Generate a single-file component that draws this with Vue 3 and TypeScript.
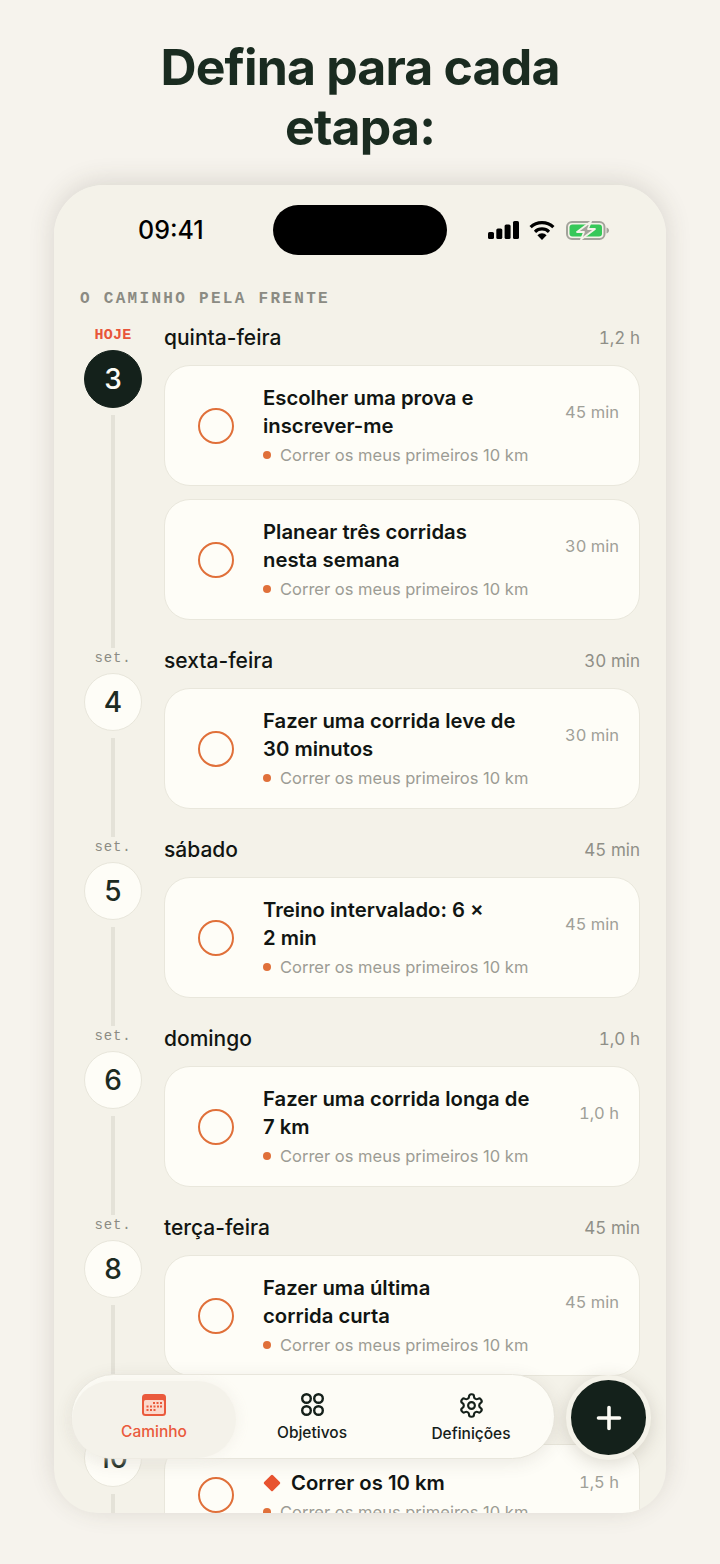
<script setup lang="ts">
interface Task { title: string; time: string; goalMark?: boolean }
interface Day { label: string; num: string; name: string; total: string; today?: boolean; tasks: Task[] }

const days: Day[] = [
  { label: 'HOJE', num: '3', name: 'quinta-feira', total: '1,2 h', today: true, tasks: [
    { title: 'Escolher uma prova e\ninscrever-me', time: '45 min' },
    { title: 'Planear três corridas\nnesta semana', time: '30 min' },
  ] },
  { label: 'set.', num: '4', name: 'sexta-feira', total: '30 min', tasks: [
    { title: 'Fazer uma corrida leve de\n30 minutos', time: '30 min' },
  ] },
  { label: 'set.', num: '5', name: 'sábado', total: '45 min', tasks: [
    { title: 'Treino intervalado: 6 ×\n2 min', time: '45 min' },
  ] },
  { label: 'set.', num: '6', name: 'domingo', total: '1,0 h', tasks: [
    { title: 'Fazer uma corrida longa de\n7 km', time: '1,0 h' },
  ] },
  { label: 'set.', num: '8', name: 'terça-feira', total: '45 min', tasks: [
    { title: 'Fazer uma última\ncorrida curta', time: '45 min' },
  ] },
  { label: 'set.', num: '10', name: 'quinta-feira', total: '1,5 h', tasks: [
    { title: 'Correr os 10 km', time: '1,5 h', goalMark: true },
  ] },
]
</script>

<template>
  <div class="page">
    <h1 class="headline">Defina para cada<br />etapa:</h1>
    <div class="phone">
      <div class="screen">
        <div class="status">
          <div class="clock">09:41</div>
          <div class="island"></div>
          <div class="indicators">
            <svg width="31" height="18" viewBox="0 0 31 18" fill="#000">
              <rect x="0" y="11" width="6" height="7" rx="1.6" />
              <rect x="8.3" y="7.5" width="6" height="10.5" rx="1.6" />
              <rect x="16.6" y="3.5" width="6" height="14.5" rx="1.6" />
              <rect x="25" y="0" width="6" height="18" rx="1.6" />
            </svg>
            <svg class="wifi" width="26" height="20" viewBox="0 0 26 20" fill="none" stroke="#000" stroke-width="3.2">
              <path d="M1.6 7.2a16.4 16.4 0 0 1 22.8 0" />
              <path d="M6 11.8a10 10 0 0 1 14 0" />
              <path d="M13 20l-4.6-4.7a6.4 6.4 0 0 1 9.2 0z" fill="#000" stroke="none" />
            </svg>
            <svg class="battery" width="43" height="19" viewBox="0 0 43 19" fill="none">
              <rect x="1" y="1" width="37.5" height="17" rx="5" stroke="#a3a39b" stroke-width="2" />
              <rect x="3.5" y="3.5" width="32.5" height="12" rx="3" fill="#37c859" />
              <path d="M40.5 6.5c1.6.5 2.5 1.6 2.5 3s-.9 2.5-2.5 3z" fill="#a3a39b" />
              <path d="M25 0.5 11 11h7L15 18.500 29 8h-7z" fill="#a3a39b" stroke="#f4f2e9" stroke-width="1.800" stroke-linejoin="round" />
            </svg>
          </div>
        </div>

        <div class="section-label">O CAMINHO PELA FRENTE</div>

        <div class="timeline">
          <section v-for="day in days" :key="day.num" class="day">
            <div class="rail">
              <div class="rail-label" :class="{ today: day.today }">{{ day.label }}</div>
              <div class="bubble" :class="{ current: day.today }">{{ day.num }}</div>
              <div class="rail-line"></div>
            </div>
            <div class="day-body">
              <div class="day-head">
                <span class="day-name">{{ day.name }}</span>
                <span class="day-total">{{ day.total }}</span>
              </div>
              <div class="task-list">
                <article v-for="task in day.tasks" :key="task.title" class="task" :class="{ milestone: task.goalMark }">
                  <div class="ring"></div>
                  <div class="task-text">
                    <div class="task-title">
                      <svg v-if="task.goalMark" class="diamond" width="18" height="18" viewBox="0 0 18 18">
                        <path d="M9 .8a1.4 1.4 0 0 1 1 .4l6.800 6.800a1.400 1.400 0 0 1 0 2L10 16.800a1.400 1.400 0 0 1-2 0L1.200 10a1.400 1.400 0 0 1 0-2L8 1.200a1.400 1.400 0 0 1 1-.4z" fill="#e8532f" />
                      </svg>
                      <span>{{ task.title }}</span>
                    </div>
                    <div class="task-goal"><i class="goal-dot"></i>Correr os meus primeiros 10 km</div>
                  </div>
                  <div class="task-time">{{ task.time }}</div>
                </article>
              </div>
            </div>
          </section>
        </div>
      </div>

      <nav class="tabbar">
        <div class="tab active">
          <svg width="24" height="22" viewBox="0 0 24 22">
            <rect x="0" y="0" width="24" height="22" rx="3.5" fill="#ea5a3c" />
            <rect x="2" y="6" width="20" height="14" rx="1.5" fill="#fbd9cd" />
            <g fill="#ea5a3c">
              <rect x="11" y="8" width="2" height="2" /><rect x="14.5" y="8" width="2" height="2" /><rect x="18" y="8" width="2" height="2" />
              <rect x="4.500" y="11.500" width="2" height="2" /><rect x="8" y="11.500" width="2" height="2" /><rect x="11.500" y="11.500" width="2" height="2" /><rect x="15" y="11.500" width="2" height="2" /><rect x="18" y="11.500" width="2" height="2" />
              <rect x="4.500" y="15" width="2" height="2" /><rect x="8" y="15" width="2" height="2" /><rect x="11.500" y="15" width="2" height="2" />
            </g>
          </svg>
          <span>Caminho</span>
        </div>
        <div class="tab goals">
          <svg width="23" height="23" viewBox="0 0 23 23" fill="none" stroke="#15201a" stroke-width="2.400">
            <circle cx="5.500" cy="5.500" r="4.300" /><circle cx="17.500" cy="5.500" r="4.300" />
            <circle cx="5.500" cy="17.500" r="4.300" /><circle cx="17.500" cy="17.500" r="4.300" />
          </svg>
          <span>Objetivos</span>
        </div>
        <div class="tab settings">
          <svg width="27" height="27" viewBox="0 0 24 24" fill="none" stroke="#15201a" stroke-width="1.900" stroke-linecap="round" stroke-linejoin="round">
            <path d="M12.220 2h-.44a2 2 0 0 0-2 2v.18a2 2 0 0 1-1 1.730l-.43.25a2 2 0 0 1-2 0l-.15-.08a2 2 0 0 0-2.730.73l-.22.38a2 2 0 0 0 .73 2.730l.15.1a2 2 0 0 1 1 1.720v.51a2 2 0 0 1-1 1.740l-.15.09a2 2 0 0 0-.73 2.730l.22.38a2 2 0 0 0 2.730.73l.15-.08a2 2 0 0 1 2 0l.43.25a2 2 0 0 1 1 1.730V20a2 2 0 0 0 2 2h.44a2 2 0 0 0 2-2v-.18a2 2 0 0 1 1-1.730l.43-.25a2 2 0 0 1 2 0l.15.08a2 2 0 0 0 2.730-.73l.22-.39a2 2 0 0 0-.73-2.730l-.15-.08a2 2 0 0 1-1-1.740v-.5a2 2 0 0 1 1-1.740l.15-.09a2 2 0 0 0 .73-2.730l-.22-.38a2 2 0 0 0-2.730-.73l-.15.08a2 2 0 0 1-2 0l-.43-.25a2 2 0 0 1-1-1.730V4a2 2 0 0 0-2-2z" />
            <circle cx="12" cy="12" r="3" />
          </svg>
          <span>Definições</span>
        </div>
      </nav>

      <button class="fab" type="button" aria-label="Adicionar">
        <svg width="26" height="26" viewBox="0 0 26 26" stroke="#fdfcf6" stroke-width="3.600" stroke-linecap="round">
          <path d="M13 2.500v21M2.500 13h21" />
        </svg>
      </button>
    </div>
  </div>
</template>

<style>
html, body { margin: 0; background: #f6f3ed; }
</style>

<style scoped>
.page {
  width: 720px;
  height: 1564px;
  overflow: hidden;
  background: #f6f3ed;
  font-family: Inter, "Liberation Sans", sans-serif;
  color: #111512;
}
.headline {
  margin: 0;
  padding-top: 37px;
  height: 185px;
  box-sizing: border-box;
  text-align: center;
  font-size: 50px;
  line-height: 60px;
  font-weight: 700;
  letter-spacing: -0.85px;
  color: #1a2b20;
}
.phone {
  position: relative;
  width: 612px;
  height: 1328px;
  margin-left: 54px;
  border-radius: 50px;
  box-shadow: 0 -3px 26px rgba(70, 60, 45, 0.16);
}
.screen {
  height: 100%;
  overflow: hidden;
  border-radius: 50px 50px 44px 44px;
  background: #f4f2e9;
  padding: 20px 26px 0 30px;
  box-sizing: border-box;
}
.status {
  display: grid;
  grid-template-columns: 1fr 174px 1fr;
  align-items: center;
  height: 50px;
  margin: 0 -26px 0 -30px;
}
.clock {
  padding-left: 84px;
  font-size: 25px;
  font-weight: 500;
  color: #000;
}
.island {
  height: 50px;
  border-radius: 25px;
  background: #000;
}
.indicators {
  display: flex;
  align-items: center;
  padding-left: 41px;
}
.wifi { margin-left: 10px; }
.battery { margin-left: 11px; }
.section-label {
  margin: 33px 0 17px -4px;
  height: 20px;
  font-family: "Liberation Mono", monospace;
  font-weight: 700;
  font-size: 16px;
  line-height: 22px;
  letter-spacing: 2.300px;
  color: #8b8b83;
  white-space: nowrap;
}
.day {
  display: flex;
  gap: 22px;
}
.rail {
  width: 58px;
  flex: none;
  display: flex;
  flex-direction: column;
  align-items: center;
}
.rail-label {
  height: 18px;
  line-height: 20px;
  margin-bottom: 7px;
  font-family: "Liberation Mono", monospace;
  font-size: 14px;
  letter-spacing: 0.8px;
  color: #8b8b83;
}
.rail-label.today {
  line-height: 21px;
  font-weight: 700;
  font-size: 15px;
  letter-spacing: 0.3px;
  color: #e8553a;
}
.bubble {
  width: 58px;
  height: 58px;
  flex: none;
  box-sizing: border-box;
  border-radius: 50%;
  display: flex;
  align-items: center;
  justify-content: center;
  font-size: 28px;
  font-weight: 550;
  color: #1c2b22;
  background: #fefdf7;
  border: 1.500px solid #e8e6db;
}
.bubble.current {
  background: #14211b;
  border-color: #14211b;
  color: #fdfcf6;
}
.rail-line {
  flex: 1;
  width: 4px;
  margin-top: 7px;
  background: #e4e2d8;
}
.day-body {
  flex: 1;
  min-width: 0;
  padding-bottom: 28px;
}
.day-head {
  display: flex;
  justify-content: space-between;
  align-items: center;
  height: 24px;
  margin-bottom: 16px;
}
.day-name {
  font-size: 21px;
  font-weight: 500;
  color: #111512;
}
.day-total {
  font-size: 17px;
  color: #8f8f87;
  font-variant-numeric: tabular-nums;
  padding-top: 1px;
}
.task-list {
  display: flex;
  flex-direction: column;
  gap: 13px;
}
.task {
  display: flex;
  align-items: center;
  height: 121px;
  box-sizing: border-box;
  padding: 0 20px 0 33px;
  background: #fefdf7;
  border: 1.500px solid #e9e7dc;
  border-radius: 26px;
}
.task.milestone { height: 102px; }
.ring {
  width: 36px;
  height: 36px;
  flex: none;
  box-sizing: border-box;
  border: 2.500px solid #e0703a;
  border-radius: 50%;
}
.task-text {
  flex: 1;
  min-width: 0;
  margin-left: 29px;
}
.task-title {
  display: flex;
  align-items: center;
  font-size: 20.300px;
  line-height: 28px;
  font-weight: 600;
  color: #111512;
  white-space: pre-line;
}
.milestone .task-title { margin-top: 3px; }
.diamond { margin-right: 10px; flex: none; }
.task-goal {
  display: flex;
  align-items: center;
  margin-top: 3px;
  height: 24px;
  font-size: 16.500px;
  color: #9c9c94;
  white-space: nowrap;
}
.goal-dot {
  width: 8px;
  height: 8px;
  border-radius: 50%;
  background: #e0703a;
  margin-right: 9px;
}
.task-time {
  flex: none;
  padding-bottom: 27px;
  font-size: 16.500px;
  color: #a0a098;
  font-variant-numeric: tabular-nums;
}
.tabbar {
  position: absolute;
  left: 17px;
  bottom: 54px;
  width: 484px;
  height: 85px;
  box-sizing: border-box;
  display: grid;
  grid-template-columns: 164px 152px 1fr;
  background: #fdfcf6;
  border: 1.500px solid #e8e6dc;
  border-radius: 43px;
  box-shadow: 0 4px 18px rgba(70, 60, 45, 0.1);
}
.tab {
  display: flex;
  flex-direction: column;
  align-items: center;
  font-size: 15.500px;
  font-weight: 500;
  color: #15201a;
}
.tab.active {
  margin: 6px 0 0 0;
  padding-top: 13px;
  gap: 6px;
  background: #f4f2ea;
  border-radius: 40px;
  color: #ea5a3c;
  box-shadow: 2px 0 12px rgba(244, 242, 234, 0.9);
}
.tab.goals {
  padding-top: 18px;
  gap: 7px;
}
.tab.settings {
  padding-top: 17px;
  gap: 5px;
}
.fab {
  position: absolute;
  left: 512px;
  bottom: 53px;
  width: 85px;
  height: 85px;
  box-sizing: border-box;
  padding: 0;
  display: flex;
  align-items: center;
  justify-content: center;
  background: #14211b;
  border: 5px solid #f4f2e9;
  border-radius: 50%;
  box-shadow: 0 4px 18px rgba(70, 60, 45, 0.18);
}
</style>
